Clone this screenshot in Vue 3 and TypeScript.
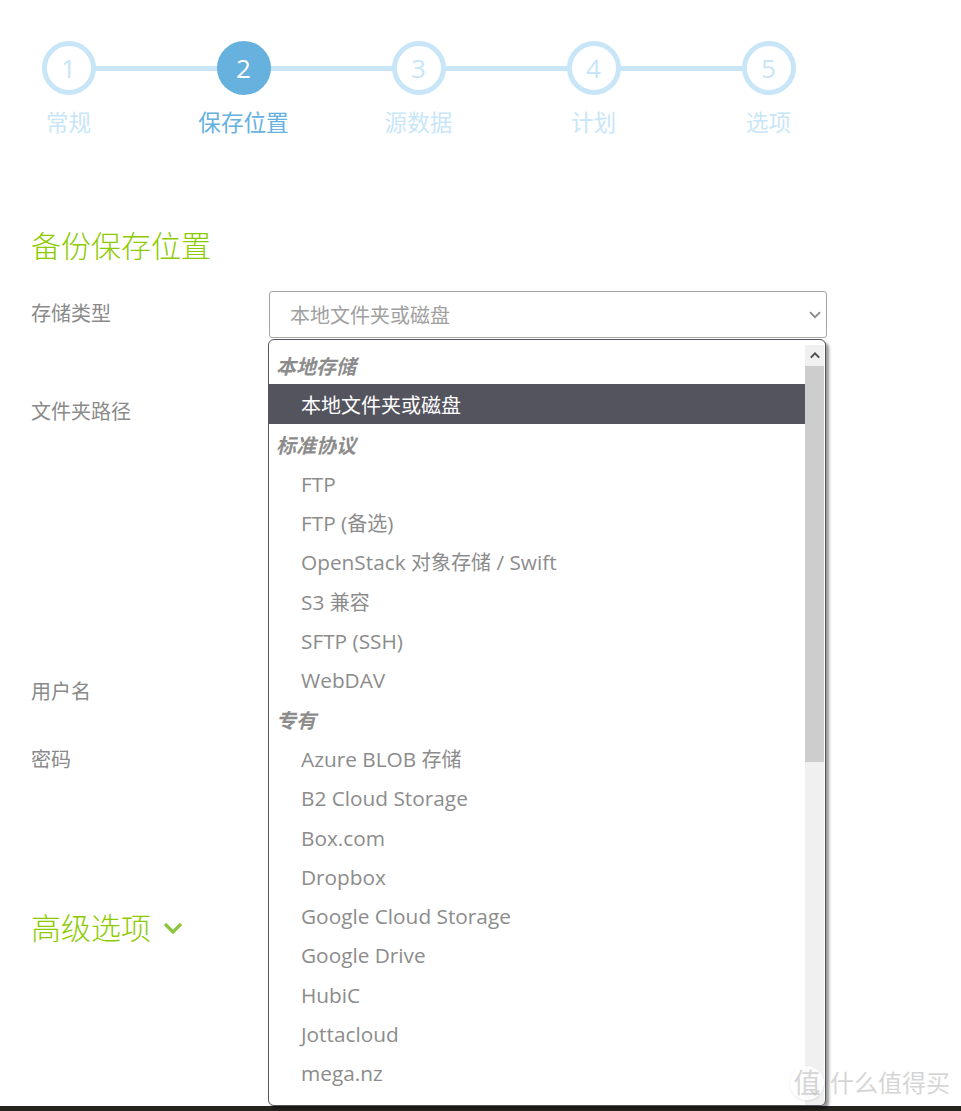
<script setup lang="ts">
interface Step {
  num: number
  label: string
}

interface Option {
  text: string
  group?: boolean
  selected?: boolean
}

const steps: Step[] = [
  { num: 1, label: '常规' },
  { num: 2, label: '保存位置' },
  { num: 3, label: '源数据' },
  { num: 4, label: '计划' },
  { num: 5, label: '选项' },
]

const options: Option[] = [
  { text: '本地存储', group: true },
  { text: '本地文件夹或磁盘', selected: true },
  { text: '标准协议', group: true },
  { text: 'FTP' },
  { text: 'FTP (备选)' },
  { text: 'OpenStack 对象存储 / Swift' },
  { text: 'S3 兼容' },
  { text: 'SFTP (SSH)' },
  { text: 'WebDAV' },
  { text: '专有', group: true },
  { text: 'Azure BLOB 存储' },
  { text: 'B2 Cloud Storage' },
  { text: 'Box.com' },
  { text: 'Dropbox' },
  { text: 'Google Cloud Storage' },
  { text: 'Google Drive' },
  { text: 'HubiC' },
  { text: 'Jottacloud' },
  { text: 'mega.nz' },
]

// latin runs are set a bit larger than the chinese ones
const cjkRun = /([\u4e00-\u9fff]+)/
const parts = (text: string) => text.split(cjkRun).filter(Boolean)
const isCjk = (part: string) => cjkRun.test(part)
</script>

<template>
  <div class="page">
    <main class="content">
      <ol class="steps">
        <li v-for="step in steps" :key="step.num" class="step" :class="{ active: step.num === 2 }">
          <span class="circle">{{ step.num }}</span>
          <span class="step-label">{{ step.label }}</span>
        </li>
      </ol>

      <h2 class="heading">备份保存位置</h2>

      <div class="row row-type">
        <label class="field-label">存储类型</label>
        <div class="select-wrap">
          <div class="select">
            <span>本地文件夹或磁盘</span>
            <svg class="select-arrow" width="12" height="8" viewBox="0 0 12 8">
              <path d="M1 1.2 6 6.2 11 1.2" fill="none" stroke="#8a8a8a" stroke-width="1.8" />
            </svg>
          </div>

          <div class="dropdown">
            <ul class="list">
              <li
                v-for="opt in options"
                :key="opt.text"
                class="option"
                :class="{ group: opt.group, selected: opt.selected }"
              >
                <span v-for="(part, i) in parts(opt.text)" :key="i" :class="{ cjk: isCjk(part) }">{{ part }}</span>
              </li>
            </ul>
            <div class="scrollbar">
              <div class="scroll-btn">
                <svg width="10" height="7" viewBox="0 0 10 7">
                  <path d="M0.8 5.6 5 1.4 9.2 5.6" fill="none" stroke="#505050" stroke-width="2" />
                </svg>
              </div>
              <div class="thumb"></div>
              <div class="scroll-btn bottom">
                <svg width="10" height="7" viewBox="0 0 10 7">
                  <path d="M0.8 1.4 5 5.6 9.2 1.4" fill="none" stroke="#505050" stroke-width="2" />
                </svg>
              </div>
            </div>
          </div>
        </div>
      </div>

      <div class="row row-path"><label class="field-label">文件夹路径</label></div>
      <div class="row row-user"><label class="field-label">用户名</label></div>
      <div class="row row-pass"><label class="field-label">密码</label></div>

      <h2 class="heading advanced">
        高级选项
        <svg width="20" height="12" viewBox="0 0 20 12">
          <path d="M2 2 10 10 18 2" fill="none" stroke="#8cc63f" stroke-width="3.2" />
        </svg>
      </h2>
    </main>

    <footer class="strip"></footer>

    <div class="watermark">
      <span class="wm-badge">值</span>
      <span>什么值得买</span>
    </div>
  </div>
</template>

<style scoped>
.page {
  position: relative;
  display: flex;
  flex-direction: column;
  height: 1111px;
  overflow: hidden;
  background: #fff;
  font-family: "Open Sans", "Noto Sans CJK SC", sans-serif;
}

.content {
  flex: 1;
  padding: 41px 0 0 31px;
}

.steps {
  display: flex;
  margin: 0 0 0 -50px;
  padding: 0;
  list-style: none;
}

.step {
  position: relative;
  display: flex;
  flex-direction: column;
  align-items: center;
  width: 175px;
}

.step:not(:last-child)::after {
  content: "";
  position: absolute;
  left: 50%;
  top: 25px;
  width: 175px;
  height: 5px;
  background: #c8e6f8;
}

.circle {
  position: relative;
  z-index: 1;
  display: flex;
  align-items: center;
  justify-content: center;
  box-sizing: border-box;
  width: 54px;
  height: 54px;
  border: 5px solid #c8e6f8;
  border-radius: 50%;
  background: #fff;
  color: #c8e6f8;
  font-size: 26px;
}

.step-label {
  margin-top: 13px;
  color: #c8e6f8;
  font-size: 22.6px;
  line-height: 30px;
}

.step.active .circle {
  border-color: #66b1de;
  background: #66b1de;
  color: #fff;
}

.step.active .step-label {
  color: #66b1de;
}

.heading {
  margin: 87px 0 0;
  color: #8ccb00;
  font-size: 30px;
  font-weight: 300;
  line-height: 42px;
}

.row {
  display: flex;
}

.field-label {
  width: 238px;
  flex-shrink: 0;
  color: #8a8a8a;
  font-size: 20px;
  line-height: 28px;
}

.row-type {
  margin-top: 24px;
  height: 47px;
}

.row-type .field-label {
  padding-top: 9px;
}

.row-path {
  margin-top: 60px;
  height: 28px;
}

.row-user {
  margin-top: 252px;
  height: 28px;
}

.row-pass {
  margin-top: 40px;
  height: 28px;
}

.select-wrap {
  position: relative;
  width: 558px;
}

.select {
  display: flex;
  align-items: center;
  justify-content: space-between;
  box-sizing: border-box;
  height: 47px;
  padding: 0 5px 0 20px;
  border: 1px solid #a6a6a6;
  border-radius: 3px;
  color: #a0a0a0;
  font-size: 20px;
}

.dropdown {
  position: absolute;
  z-index: 2;
  top: 48px;
  left: -1px;
  display: flex;
  box-sizing: border-box;
  width: 558px;
  height: 767px;
  overflow: hidden;
  border: 1px solid #55555f;
  border-radius: 6px;
  background: #fff;
  box-shadow: 3px 3px 3px rgba(0, 0, 0, 0.4);
}

.list {
  flex: 1;
  margin: 0;
  padding: 5px 0 0;
  list-style: none;
}

.option {
  box-sizing: border-box;
  height: 39.3px;
  padding: 2px 0 0 32px;
  color: #8c8c8c;
  font-size: 20.8px;
  line-height: 38.3px;
  white-space: pre;
}

.option .cjk {
  font-size: 20px;
}

.option.group {
  padding-left: 7px;
  font-weight: 700;
  font-style: italic;
}

.option.selected {
  background: #54545f;
  color: #fff;
}

.scrollbar {
  display: flex;
  flex-direction: column;
  flex-shrink: 0;
  width: 19px;
  margin: 5px 1px 0 0;
  background: #f0f0f0;
}

.scroll-btn {
  display: flex;
  align-items: center;
  justify-content: center;
  height: 21px;
  flex-shrink: 0;
}

.scroll-btn.bottom {
  margin-top: auto;
  height: 26px;
}

.thumb {
  height: 396px;
  background: #cdcdcd;
}

.advanced {
  display: flex;
  align-items: center;
  gap: 12px;
  margin-top: 133px;
}

.strip {
  height: 5px;
  flex-shrink: 0;
  background: #26241f;
}

.watermark {
  position: absolute;
  z-index: 3;
  right: 11px;
  bottom: 11px;
  display: flex;
  align-items: center;
  gap: 6px;
  color: rgba(200, 200, 200, 0.75);
  font-size: 24px;
  line-height: 30px;
}

.wm-badge {
  display: flex;
  align-items: center;
  justify-content: center;
  width: 34px;
  height: 34px;
  border-radius: 50%;
  background: rgba(255, 255, 255, 0.75);
  box-shadow: 0 1px 3px rgba(0, 0, 0, 0.1);
  font-size: 27px;
}
</style>
